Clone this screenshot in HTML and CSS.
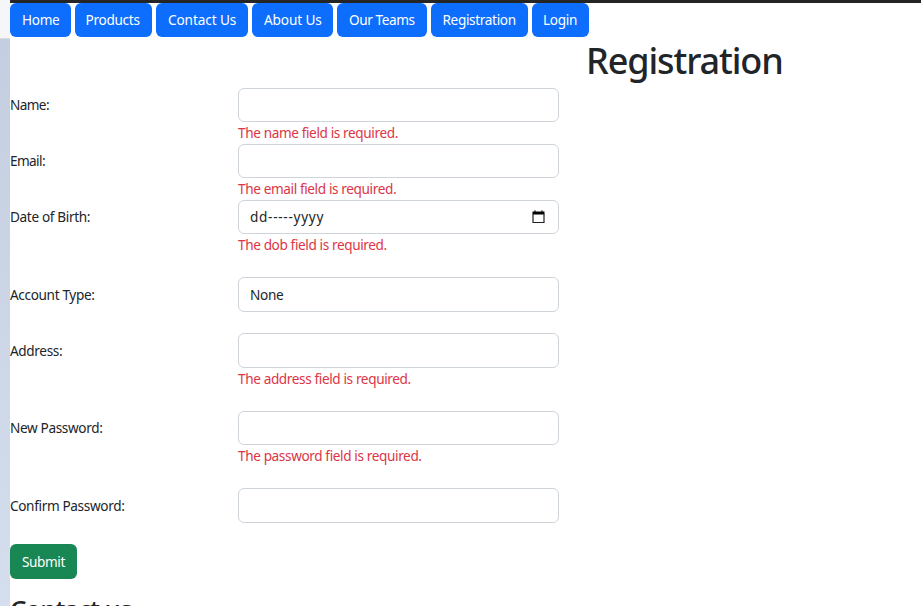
FILE: index.html
```html
<!DOCTYPE html>
<html lang="en">
<head>
<meta charset="utf-8">
<title>Registration</title>
<link rel="stylesheet" href="styles.css">
</head>
<body>
<div class="gutter"><div class="gutter-top"></div><div class="gutter-body"></div></div>
<main class="page">
  <nav class="nav">
    <a class="btn home"><span>Home</span></a>
    <a class="btn products"><span>Products</span></a>
    <a class="btn contact"><span>Contact Us</span></a>
    <a class="btn about"><span>About Us</span></a>
    <a class="btn teams"><span>Our Teams</span></a>
    <a class="btn register"><span>Registration</span></a>
    <a class="btn login"><span>Login</span></a>
  </nav>
  <h1 class="title"><span>Registration</span></h1>
  <form class="form">
    <div class="row"><label class="short"><span>Name:</span></label><div class="field"><div class="control"></div><p class="error"><span>The name field is required.</span></p></div></div>
    <div class="row"><label class="short"><span>Email:</span></label><div class="field"><div class="control"></div><p class="error"><span>The email field is required.</span></p></div></div>
    <div class="row spaced"><label><span>Date of Birth:</span></label><div class="field"><div class="control"><span class="date">dd-----yyyy</span>
      <svg class="calendar" viewBox="0 0 13 14" width="13" height="14"><path d="M.5 1.5h12v3H.5z"/><path d="M2 .5h2v1.5H2zM9 .5h2v1.5H9z" fill="#444"/><path d="M1 4v8.5h11V4" fill="none" stroke="#222" stroke-width="1.2"/></svg>
    </div><p class="error"><span>The dob field is required.</span></p></div></div>
    <div class="row plain"><label class="low"><span>Account Type:</span></label><div class="field"><div class="control tall"><span>None</span></div></div></div>
    <div class="row address"><label class="low"><span>Address:</span></label><div class="field"><div class="control tall"></div><p class="error"><span>The address field is required.</span></p></div></div>
    <div class="row spaced"><label><span>New Password:</span></label><div class="field"><div class="control"></div><p class="error"><span>The password field is required.</span></p></div></div>
    <div class="row plain"><label class="low"><span>Confirm Password:</span></label><div class="field"><div class="control tall"></div></div></div>
    <button class="submit" type="button"><span>Submit</span></button>
  </form>
  <h2 class="contact-title"><span>Contact us</span></h2>
</main>
</body>
</html>
```
FILE: styles.css
```css
* { box-sizing: border-box; }
body {
  margin: 0;
  height: 606px;
  overflow: hidden;
  display: flex;
  background: #fff;
  color: #212529;
  font: 13.6px/22px "Noto Sans", "Open Sans", sans-serif;
}
h1, h2, p { margin: 0; }
.gutter { width: 10px; flex: none; display: flex; flex-direction: column; }
.gutter-top { height: 39px; background: #f5f6f8; border-bottom: 1px solid #dcdcdc; }
.gutter-body { flex: 1; background: linear-gradient(#c5cee0, #d4deed); }
.page { flex: 1; height: 606px; overflow: hidden; border-top: 3px solid #252525; }
.nav { display: flex; gap: 4px; height: 34px; }
.btn {
  border-radius: 6px;
  background: #0d6efd;
  color: #fff;
  padding-left: 12px;
  line-height: 34px;
  white-space: nowrap;
}
.home { width: 61px; letter-spacing: -.3px; }
.products { width: 77px; padding-left: 10.5px; letter-spacing: -.3px; }
.contact { width: 92px; letter-spacing: -.1px; }
.about { width: 81px; letter-spacing: -.1px; }
.teams { width: 90px; letter-spacing: -.4px; }
.register { width: 97px; padding-left: 11.5px; letter-spacing: -.35px; }
.login { width: 57px; padding-left: 11px; letter-spacing: -.3px; }
.title {
  height: 51px;
  padding-left: 576px;
  font-size: 36px;
  font-weight: 500;
  line-height: 47px;
  letter-spacing: -1.1px;
}
.row { display: flex; height: 56px; white-space: nowrap; }
.row.spaced { height: 77px; }
.row.plain { height: 56px; }
.row.address { height: 78px; }
label { width: 228px; line-height: 34px; letter-spacing: -.35px; }
label.short { letter-spacing: -.6px; }
label.low { line-height: 36px; }
.field { width: 321px; }
.control {
  display: flex;
  align-items: center;
  justify-content: space-between;
  height: 34px;
  padding: 0 13px 0 11px;
  border: 1px solid #ced4da;
  border-radius: 6px;
  background: #fff;
  letter-spacing: -.3px;
}
.control.tall { height: 35px; }
.date { letter-spacing: .7px; }
.error { color: #dc3545; line-height: 22px; letter-spacing: -.38px; }
.submit {
  display: block;
  width: 67px;
  height: 35px;
  padding: 1px 0 0 12px;
  border: 0;
  border-radius: 6px;
  background: #198754;
  color: #fff;
  font: inherit;
  letter-spacing: -.4px;
  text-align: left;
}
.contact-title { padding-top: 12px; font-size: 26px; font-weight: 500; line-height: 36px; letter-spacing: -1.05px; }
```
